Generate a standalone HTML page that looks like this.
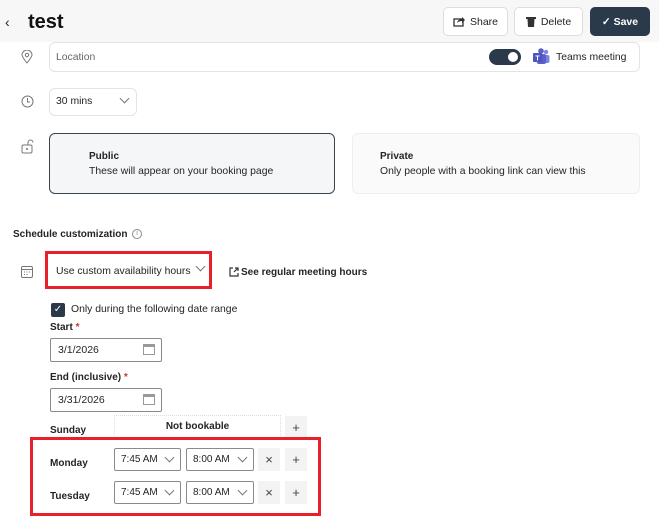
<!DOCTYPE html>
<html><head><meta charset="utf-8"><style>
*{box-sizing:border-box;margin:0;padding:0}
body{width:659px;height:518px;overflow:hidden;background:#fff;font-family:"Liberation Sans",sans-serif;color:#242424;position:relative;font-size:10.4px}
.a{position:absolute}
.hdr{left:0;top:0;width:659px;height:42px;background:#f7f7f7}
.btn{border:1px solid #ddd;border-radius:5px;background:#fff;font-size:10.5px;display:flex;align-items:center;justify-content:center;gap:5px}
.inp{border:1px solid #e3e3e3;border-radius:6px;background:#fff}
.sel{border:1px solid #8a8a8a;border-radius:2px;background:#fff;font-size:10px;display:flex;align-items:center;padding-left:6px}
.chev{position:absolute;right:7px;top:4px;width:7px;height:7px;border-right:1px solid #777;border-bottom:1px solid #777;transform:rotate(45deg)}
.sq{background:#f3f3f3;display:flex;align-items:center;justify-content:center;font-size:13px;color:#444}
.b{font-weight:bold;font-size:10px}
</style></head><body>
<div class="a hdr"></div>
<div class="a" style="left:5px;top:14px;font-size:14px">‹</div>
<div class="a" style="left:28px;top:11px;font-size:20px;font-weight:bold;color:#111">test</div>
<div class="a btn" style="left:443px;top:7px;width:65px;height:29px"><svg width="12" height="11" viewBox="0 0 12 11"><rect x="1" y="3" width="9" height="7" fill="none" stroke="#333" stroke-width="1.3"/><path d="M4 7 Q5 3 9 3 V1 L12 4 L9 7 V5 Q6 5 4 7Z" fill="#333"/></svg>Share</div>
<div class="a btn" style="left:514px;top:7px;width:69px;height:29px"><svg width="10" height="11" viewBox="0 0 10 11"><rect x="0" y="1" width="10" height="2" fill="#333"/><path d="M1.5 3 H8.5 L8 11 H2Z" fill="#333"/></svg>Delete</div>
<div class="a btn" style="left:590px;top:7px;width:60px;height:29px;background:#2b3a4b;border-color:#2b3a4b;color:#fff;font-weight:bold">✓ Save</div>

<svg class="a" style="left:21px;top:50px" width="12" height="14" viewBox="0 0 12 14"><path d="M6 13 C2 8 1 6 1 5 A5 5 0 0 1 11 5 C11 6 10 8 6 13Z" fill="none" stroke="#777"/><circle cx="6" cy="5" r="1.7" fill="none" stroke="#777"/></svg>
<div class="a inp" style="left:49px;top:42px;width:591px;height:30px"></div>
<div class="a" style="left:56px;top:52px;color:#666">Location</div>
<div class="a" style="left:489px;top:49px;width:32px;height:16px;border-radius:8px;background:#2b3a4b"><div class="a" style="right:3px;top:3px;width:10px;height:10px;border-radius:5px;background:#fff"></div></div>
<svg class="a" style="left:532px;top:48px" width="18" height="17" viewBox="0 0 18 17"><circle cx="14" cy="4" r="2.2" fill="#7b83eb"/><rect x="10" y="7" width="7.5" height="8" rx="2" fill="#7b83eb"/><circle cx="9" cy="3" r="2.8" fill="#5b5fc7"/><rect x="5" y="6" width="9" height="10" rx="2" fill="#5b5fc7"/><rect x="1" y="5" width="9" height="9" rx="1" fill="#4b53bc"/><text x="5.5" y="12.5" font-size="7" font-weight="bold" fill="#fff" text-anchor="middle" font-family="Liberation Sans">T</text></svg>
<div class="a" style="left:556px;top:52px">Teams meeting</div>

<svg class="a" style="left:21px;top:95px" width="13" height="13" viewBox="0 0 13 13"><circle cx="6.5" cy="6.5" r="5.5" fill="none" stroke="#777"/><path d="M6.5 3 V7 H9" fill="none" stroke="#777"/></svg>
<div class="a inp" style="left:49px;top:88px;width:88px;height:28px"></div>
<div class="a" style="left:56px;top:96px">30 mins</div>
<div class="a chev" style="left:121px;top:95px"></div>

<svg class="a" style="left:21px;top:139px" width="13" height="15" viewBox="0 0 13 15"><rect x="1" y="6" width="10" height="8" rx="1.5" fill="none" stroke="#777"/><path d="M7 6 V3.5 A2.5 2.5 0 0 1 12 3.5" fill="none" stroke="#777"/><circle cx="6" cy="10" r="1" fill="#777"/></svg>
<div class="a" style="left:49px;top:133px;width:286px;height:61px;border:1.5px solid #3a4552;border-radius:6px;background:#f5f6f8"></div>
<div class="a b" style="left:89px;top:151px">Public</div>
<div class="a" style="left:89px;top:166px">These will appear on your booking page</div>
<div class="a" style="left:352px;top:133px;width:288px;height:61px;border:1px solid #eee;border-radius:6px;background:#fafafa"></div>
<div class="a b" style="left:380px;top:151px">Private</div>
<div class="a" style="left:380px;top:166px">Only people with a booking link can view this</div>

<div class="a b" style="left:13px;top:229px">Schedule customization</div>
<div class="a" style="left:132px;top:229px;width:10px;height:10px;border:1px solid #888;border-radius:50%;font-size:7px;text-align:center;line-height:8px;color:#888">i</div>

<svg class="a" style="left:21px;top:266px" width="12" height="12" viewBox="0 0 12 12"><rect x="0.5" y="0.5" width="11" height="11" rx="1.5" fill="none" stroke="#777"/><path d="M1 3.5 H11" stroke="#777"/><path d="M3 6h1M5.5 6h1M8 6h1M3 8.5h1M5.5 8.5h1" stroke="#777"/></svg>
<div class="a" style="left:45px;top:251px;width:167px;height:38px;border:3px solid #e8202a"></div>
<div class="a" style="left:56px;top:266px">Use custom availability hours</div>
<div class="a chev" style="left:197px;top:263px"></div>
<svg class="a" style="left:229px;top:267px" width="10" height="10" viewBox="0 0 10 10"><path d="M4 1 H1 V9 H9 V6 M6 1 H9 V4 M9 1 L5 5" fill="none" stroke="#333" stroke-width="1.2"/></svg>
<div class="a b" style="left:241px;top:267px">See regular meeting hours</div>

<div class="a" style="left:51px;top:303px;width:14px;height:14px;border-radius:2px;background:#2b3a4b;color:#fff;font-size:10px;text-align:center;line-height:14px">✓</div>
<div class="a" style="left:71px;top:304px">Only during the following date range</div>
<div class="a b" style="left:50px;top:322px">Start <span style="color:#c33">*</span></div>
<div class="a sel" style="left:50px;top:338px;width:112px;height:24px;font-size:10.5px;padding-left:7px">3/1/2026</div>
<svg class="a" style="left:143px;top:344px" width="12" height="11" viewBox="0 0 12 11"><rect x="0.5" y="0.5" width="11" height="10" fill="none" stroke="#999"/><rect x="0.5" y="0.5" width="11" height="2.5" fill="#999"/></svg>
<div class="a b" style="left:50px;top:372px">End (inclusive) <span style="color:#c33">*</span></div>
<div class="a sel" style="left:50px;top:388px;width:112px;height:24px;font-size:10.5px;padding-left:7px">3/31/2026</div>
<svg class="a" style="left:143px;top:394px" width="12" height="11" viewBox="0 0 12 11"><rect x="0.5" y="0.5" width="11" height="10" fill="none" stroke="#999"/><rect x="0.5" y="0.5" width="11" height="2.5" fill="#999"/></svg>

<div class="a b" style="left:50px;top:425px">Sunday</div>
<div class="a b" style="left:114px;top:415px;width:167px;height:23px;border:1px dotted #ddd;text-align:center;line-height:22px">Not bookable</div>
<div class="a sq" style="left:285px;top:416px;width:22px;height:22px">+</div>

<div class="a" style="left:30px;top:437px;width:291px;height:79px;border:3px solid #e8202a"></div>
<div class="a b" style="left:50px;top:458px">Monday</div>
<div class="a sel" style="left:114px;top:448px;width:67px;height:23px">7:45 AM<div class="chev" style="top:5px"></div></div>
<div class="a sel" style="left:186px;top:448px;width:68px;height:23px">8:00 AM<div class="chev" style="top:5px"></div></div>
<div class="a sq" style="left:258px;top:448px;width:22px;height:23px">×</div>
<div class="a sq" style="left:285px;top:448px;width:22px;height:23px">+</div>
<div class="a b" style="left:50px;top:491px">Tuesday</div>
<div class="a sel" style="left:114px;top:481px;width:67px;height:23px">7:45 AM<div class="chev" style="top:5px"></div></div>
<div class="a sel" style="left:186px;top:481px;width:68px;height:23px">8:00 AM<div class="chev" style="top:5px"></div></div>
<div class="a sq" style="left:258px;top:481px;width:22px;height:23px">×</div>
<div class="a sq" style="left:285px;top:481px;width:22px;height:23px">+</div>
</body></html>
